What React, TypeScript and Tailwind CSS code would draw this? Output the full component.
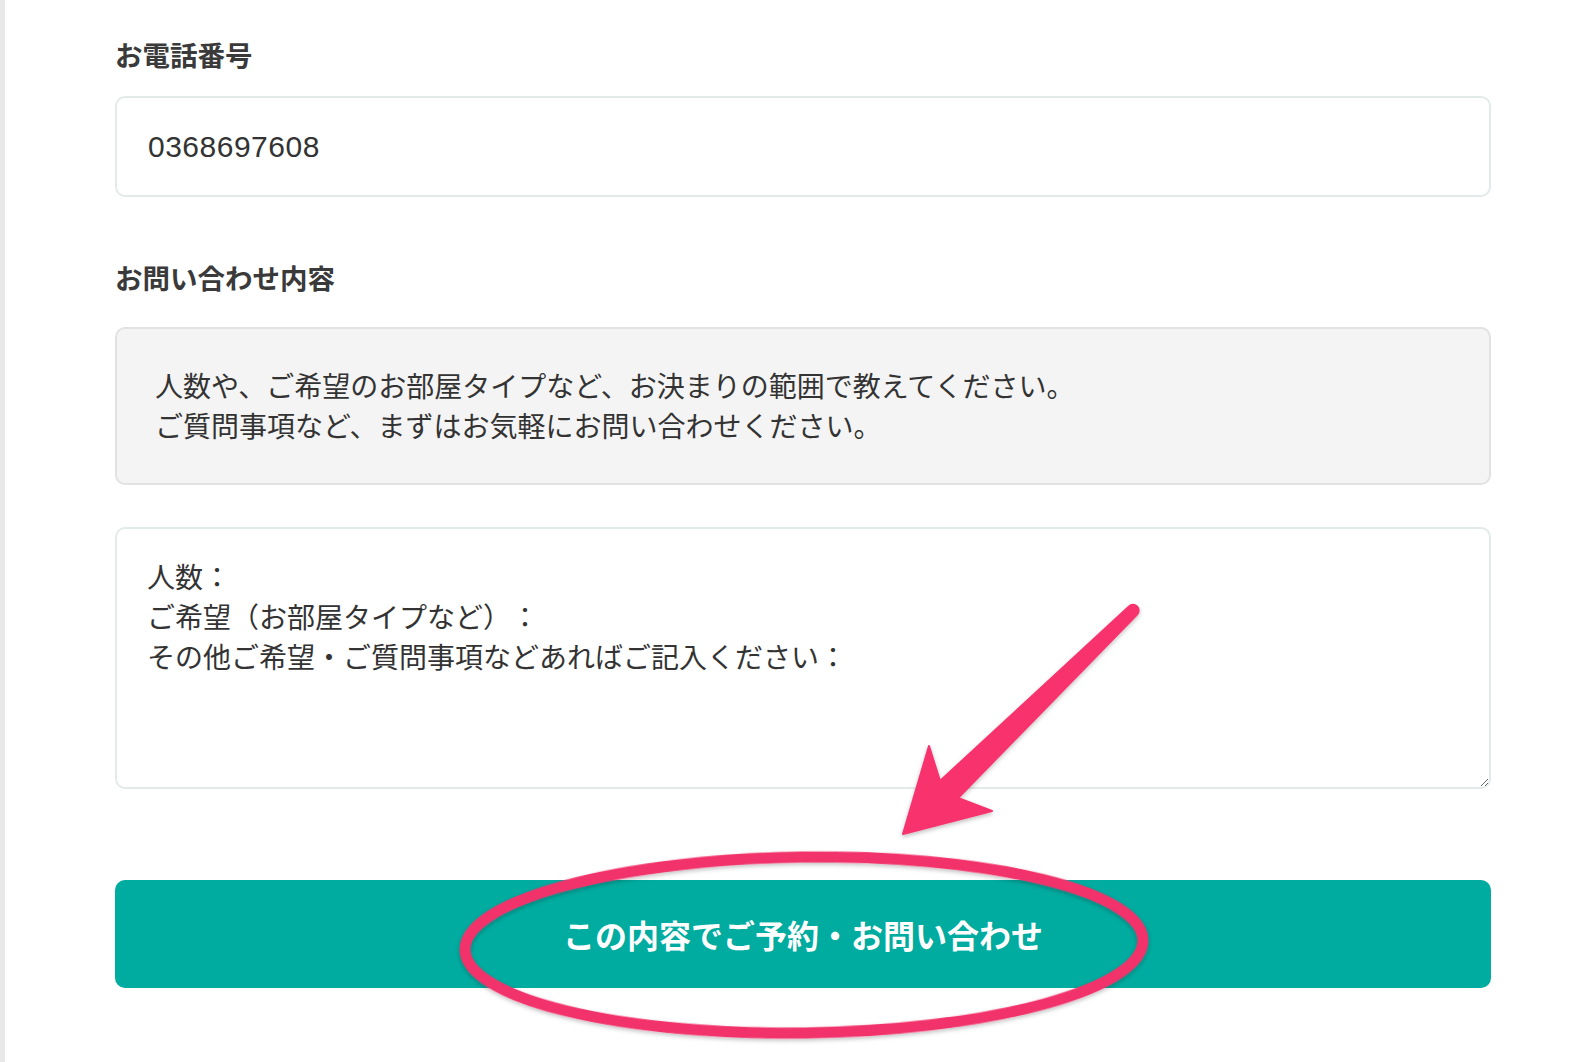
import React from "react";

const jp = '"Noto Sans CJK JP", "Noto Sans", sans-serif';

export default function App() {
  return (
    <div
      className="relative flex w-[1594px] h-[1062px] overflow-hidden bg-white text-[#333]"
      style={{ fontFamily: jp }}
    >
      {/* left rail */}
      <div className="w-[5px] shrink-0 bg-[#e8e8e8]" />

      <form className="ml-[110px] flex w-[1376px] flex-col pt-[34px]">
        <label className="text-[27.5px] font-bold leading-[40px] text-[#3a3a3a]">お電話番号</label>
        <input
          type="text"
          defaultValue="0368697608"
          readOnly
          className="mt-[22px] h-[101px] w-full rounded-[10px] border-2 border-[#e3eaea] bg-white px-[31px] text-[30px] tracking-[0.5px] text-[#333] outline-none"
          style={{ fontFamily: '"Liberation Sans", "Noto Sans CJK JP", sans-serif' }}
        />

        <label className="mt-[60px] text-[27.5px] font-bold leading-[40px] text-[#3a3a3a]">お問い合わせ内容</label>

        <div className="mt-[30px] h-[158px] rounded-[10px] border-2 border-[#e2e2e2] bg-[#f4f4f4] px-[38px] pt-[36px] text-[28px] leading-[40px] text-[#333] [text-spacing-trim:space-all]">
          <p>人数や、ご希望のお部屋タイプなど、お決まりの範囲で教えてください。</p>
          <p>ご質問事項など、まずはお気軽にお問い合わせください。</p>
        </div>

        <textarea
          readOnly
          defaultValue={"人数：\nご希望（お部屋タイプなど）：\nその他ご希望・ご質問事項などあればご記入ください："}
          className="mt-[42px] h-[262px] w-full resize-y rounded-[10px] border-2 border-[#e3eaea] bg-white px-[30px] pt-[27px] text-[28px] leading-[40px] text-[#333] outline-none [text-spacing-trim:space-all]"
          style={{ fontFamily: jp }}
        />

        <button
          type="button"
          className="mt-[91px] flex h-[108px] w-full items-center justify-center rounded-[10px] bg-[#00ab9f] text-[32px] font-bold text-white"
        >
          この内容でご予約・お問い合わせ
        </button>
      </form>

      {/* annotation overlay */}
      <svg
        className="pointer-events-none absolute inset-0"
        width="1594"
        height="1062"
        viewBox="0 0 1594 1062"
      >
        <defs>
          <filter id="sh" x="-10%" y="-10%" width="120%" height="130%">
            <feDropShadow dx="0" dy="2" stdDeviation="2" floodColor="#000" floodOpacity="0.25" />
          </filter>
        </defs>
        <path
          d="M903 834 L992 811 L958 798 L1137 614.5 A5.5 5.5 0 0 0 1129 606.5 L940 781 L929 746 Z"
          fill="#f7326d"
          stroke="#f7326d"
          strokeWidth="2"
          strokeLinejoin="round"
          filter="url(#sh)"
        />
        <ellipse
          cx="804"
          cy="945"
          rx="339"
          ry="88"
          fill="none"
          stroke="#f2316b"
          strokeWidth="11"
          transform="rotate(-0.8 804 945)"
          filter="url(#sh)"
        />
      </svg>
    </div>
  );
}
